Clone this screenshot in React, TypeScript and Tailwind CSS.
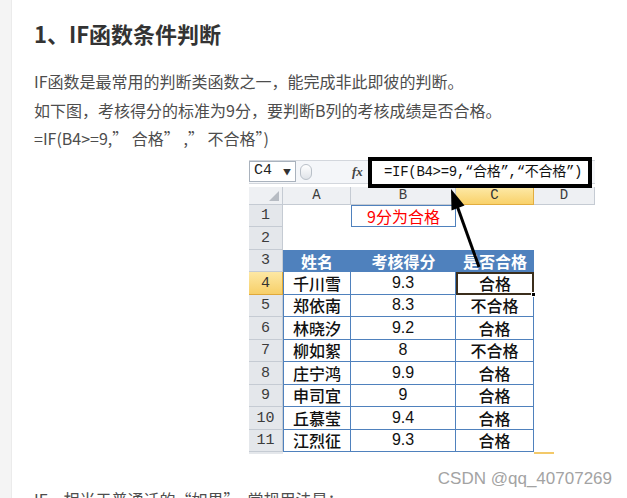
import React from 'react';

const cjk = "font-['Noto_Sans_CJK_SC',sans-serif]";
const mono = "font-['Liberation_Mono','Noto_Sans_CJK_SC',monospace]";

const rows = [
  ['千川雪', '9.3', '合格'],
  ['郑依南', '8.3', '不合格'],
  ['林晓汐', '9.2', '合格'],
  ['柳如絮', '8', '不合格'],
  ['庄宁鸿', '9.9', '合格'],
  ['申司宜', '9', '合格'],
  ['丘慕莹', '9.4', '合格'],
  ['江烈征', '9.3', '合格'],
];

function RowHead({ n, active = false }: { n: string; active?: boolean }) {
  return (
    <div
      className={`flex items-end justify-center pb-[1px] border-r border-b ${mono} text-[15px] leading-[18px] ${
        active
          ? 'bg-[linear-gradient(to_bottom,#fde8a4,#f7cf68)] border-[#e0a93a] text-[#333]'
          : 'bg-[#e4e7eb] border-[#c5cbd3] text-[#3c3c3c]'
      }`}
    >
      {n}
    </div>
  );
}

function ColHead({ l, active = false }: { l: string; active?: boolean }) {
  return (
    <div
      className={`flex items-center justify-center border-r border-b ${mono} text-[14px] ${
        active
          ? 'bg-[linear-gradient(to_bottom,#fdeaa8,#f9d16a)] border-[#e2ad3f] text-[#333]'
          : 'bg-[#eef0f3] border-[#c5cbd3] text-[#3c3c3c]'
      }`}
    >
      {l}
    </div>
  );
}

function ExcelShot() {
  return (
    <div className="relative w-[346px] h-[298px] bg-white overflow-hidden">
      {/* formula bar */}
      <div className="h-[30px] flex flex-col bg-white">
        <div className="h-[4px] border-b border-[#d3d7dd] bg-white" />
        <div className="h-[22px] flex items-center bg-[#f4f6f9]">
          <div className="relative w-[47px] h-[21px] border border-[#a9b2bd] bg-white flex items-center pl-[4px]">
            <span className={`${mono} text-[15px] text-[#222]`}>C4</span>
            <span className="absolute right-[4px] top-[4px] text-[8px] text-[#333]">▼</span>
          </div>
          <div className="ml-[4px] w-[12px] h-[16px] rounded-full border border-[#b9c0c8] bg-[linear-gradient(to_bottom,#ffffff,#dfe3e8)]" />
          <span className="ml-[40px] font-['Liberation_Serif',serif] italic font-bold text-[13px] text-[#444]">fx</span>
        </div>
        <div className="h-[4px] border-t border-[#d3d7dd] bg-white" />
      </div>

      {/* sheet */}
      <div className="grid grid-cols-[34px_68px_105px_78px_61px] grid-rows-[18px_repeat(11,22.5px)_2px]">
        <div className="relative bg-[#eef0f3] border-r border-b border-[#c5cbd3]">
          <svg className="absolute right-[3px] bottom-[3px]" width="10" height="10" viewBox="0 0 10 10">
            <polygon points="10,0 10,10 0,10" fill="#b7bcc3" />
          </svg>
        </div>
        <ColHead l="A" />
        <ColHead l="B" />
        <ColHead l="C" active />
        <ColHead l="D" />

        {/* row 1 */}
        <RowHead n="1" />
        <div />
        <div className={`flex items-center justify-center border border-[#4f81bd] ${cjk} text-[16px] text-[#ff0000]`}>
          9分为合格
        </div>
        <div />
        <div />

        {/* row 2 */}
        <RowHead n="2" />
        <div />
        <div />
        <div />
        <div />

        {/* row 3 */}
        <RowHead n="3" />
        <div className={`bg-[#4f81bd] flex items-center justify-center ${cjk} font-bold text-[16px] text-white`}>姓名</div>
        <div className={`bg-[#4f81bd] flex items-center justify-center ${cjk} font-bold text-[16px] text-white`}>考核得分</div>
        <div className={`bg-[#4f81bd] flex items-center justify-center ${cjk} font-bold text-[16px] text-white`}>是否合格</div>
        <div />

        {rows.map((r, i) => (
          <React.Fragment key={i}>
            <RowHead n={String(i + 4)} active={i === 0} />
            <div className={`flex items-center justify-center border-l border-r border-b border-[#4f81bd] ${cjk} font-medium text-[16px] text-[#111]`}>
              {r[0]}
            </div>
            <div className={`flex items-center justify-center border-r border-b border-[#4f81bd] font-['Liberation_Sans',sans-serif] text-[16px] text-[#111]`}>
              {r[1]}
            </div>
            {i === 0 ? (
              <div className={`relative flex items-center justify-center border-2 border-[#3b2e1c] ${cjk} font-medium text-[16px] text-[#111]`}>
                {r[2]}
                <span className="absolute -right-[4px] -bottom-[4px] w-[5px] h-[5px] bg-black border border-white" />
              </div>
            ) : (
              <div className={`flex items-center justify-center border-r border-b border-[#4f81bd] ${cjk} font-medium text-[16px] text-[#111]`}>
                {r[2]}
              </div>
            )}
            <div />
          </React.Fragment>
        ))}

        {/* row 12 sliver */}
        <div className="bg-[#e4e7eb]" />
        <div />
        <div />
        <div />
        <div className="w-[20px] border-t-2 border-[#f3c969]" />
      </div>

      {/* callout box */}
      <div className="absolute left-[119px] top-0 w-[224px] h-[31px] border-[4px] border-black bg-white flex items-center pl-[12px]">
        <span className={`${mono} text-[14px] text-[#111] tracking-[-0.3px] whitespace-nowrap`}>
          =IF(B4&gt;=9,“合格”,“不合格”)
        </span>
      </div>

      {/* arrow */}
      <svg className="absolute left-0 top-0" width="346" height="298" viewBox="0 0 346 298">
        <line x1="208.5" y1="50" x2="230" y2="110" stroke="#000" strokeWidth="3" />
        <polygon points="202,32 215.5,48.5 202.5,53.5" fill="#000" />
      </svg>
    </div>
  );
}

export default function App() {
  return (
    <div className={`w-[627px] h-[498px] overflow-hidden bg-white flex ${cjk}`}>
      <div className="w-[12px] shrink-0 bg-[#f4f4f4] border-r border-[#ebebeb]" />
      <div className="flex-1 pl-[22px]">
        <h2 className="mt-[17px] text-[22px] leading-[32px] font-bold text-[#333]">1、IF函数条件判断</h2>
        <div className="mt-[18px] text-[16px] leading-[28.5px] text-[#4d4d4d]">
          <p>IF函数是最常用的判断类函数之一，能完成非此即彼的判断。</p>
          <p>如下图，考核得分的标准为9分，要判断B列的考核成绩是否合格。</p>
          <p className="whitespace-pre">=IF(B4&gt;=9,” 合格” ,” 不合格”)</p>
        </div>
        <div className="relative ml-[215px] mt-[4px] w-[363px] h-[328px]">
          <ExcelShot />
          <span className="absolute right-0 top-[312px] font-['Liberation_Sans',sans-serif] text-[17px] leading-[20px] text-[#a3a3a3] whitespace-nowrap">
            CSDN @qq_40707269
          </span>
        </div>
        <p className="text-[16px] leading-[28.5px] text-[#4d4d4d]">IF，相当于普通话的“如果”，常规用法是：</p>
      </div>
    </div>
  );
}
